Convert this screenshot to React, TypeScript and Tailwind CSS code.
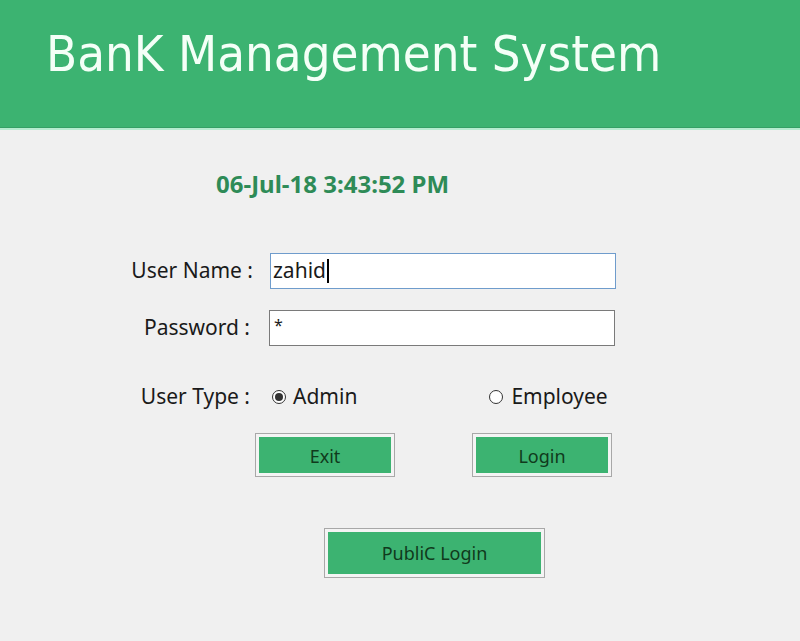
export default function App() {
  return (
    <div className="h-[641px] w-[800px] overflow-hidden bg-[#f0f0f0] font-['Noto_Sans',sans-serif] text-[#1a1a1a]">
      {/* header */}
      <div className="h-[128px] bg-[#3cb371] pl-[46px] pt-[22px] border-b border-[#34a065]">
        <h1 className="font-['DejaVu_Sans_Condensed',sans-serif] text-[50.5px] leading-[64px] text-[#f4fff7]">BanK Management System</h1>
      </div>
      <div className="h-[2px] bg-[#b5ecd0]" />

      <div className="pl-[216px] pt-[40px] text-[24px] leading-[28px] font-bold text-[#2e8b57]">06-Jul-18 3:43:52 PM</div>

      {/* form */}
      <div className="mt-[55px] flex flex-col">
        <div className="flex items-center">
          <span className="w-[254px] text-right pr-[1px] text-[21px]">User Name :</span>
          <div className="ml-[16px] h-[36px] w-[346px] border border-[#6f9ccc] bg-white pl-[2px] flex items-center text-[21px]">
            zahid<span className="ml-[1px] inline-block h-[24px] w-[2px] bg-black" />
          </div>
        </div>
        <div className="mt-[21px] flex items-center">
          <span className="w-[254px] text-right pr-[4px] text-[21px]">Password :</span>
          <div className="ml-[15px] h-[36px] w-[346px] border border-[#7a7a7a] bg-white pl-[4px] pt-[4px] text-[16px] leading-[20px]">*</div>
        </div>

        <div className="mt-[36px] flex items-center h-[30px]">
          <span className="w-[254px] text-right pr-[4px] text-[21px]">User Type :</span>
          <label className="ml-[18px] flex items-center gap-[7px] text-[21px]">
            <span className="flex h-[14px] w-[14px] items-center justify-center rounded-full border border-[#333] bg-white">
              <span className="h-[8px] w-[8px] rounded-full bg-[#333]" />
            </span>
            Admin
          </label>
          <label className="ml-[132px] flex items-center gap-[8px] text-[21px]">
            <span className="h-[14px] w-[14px] rounded-full border border-[#333] bg-white" />
            Employee
          </label>
        </div>

        <div className="mt-[21px] flex">
          <button className="ml-[255px] h-[44px] w-[140px] border border-[#a8a8a8] bg-[#f4f4f4] p-[3px]">
            <span className="flex h-full w-full items-center justify-center bg-[#3cb371] pt-[2px] text-[18px] text-[#103a1c]">Exit</span>
          </button>
          <button className="ml-[77px] h-[44px] w-[140px] border border-[#a8a8a8] bg-[#f4f4f4] p-[3px]">
            <span className="flex h-full w-full items-center justify-center bg-[#3cb371] pt-[2px] text-[18px] text-[#103a1c]">Login</span>
          </button>
        </div>

        <div className="mt-[51px] flex">
          <button className="ml-[324px] h-[50px] w-[221px] border border-[#a8a8a8] bg-[#f4f4f4] p-[3px]">
            <span className="flex h-full w-full items-center justify-center bg-[#3cb371] text-[18px] text-[#103a1c]">PubliC Login</span>
          </button>
        </div>
      </div>
    </div>
  );
}
